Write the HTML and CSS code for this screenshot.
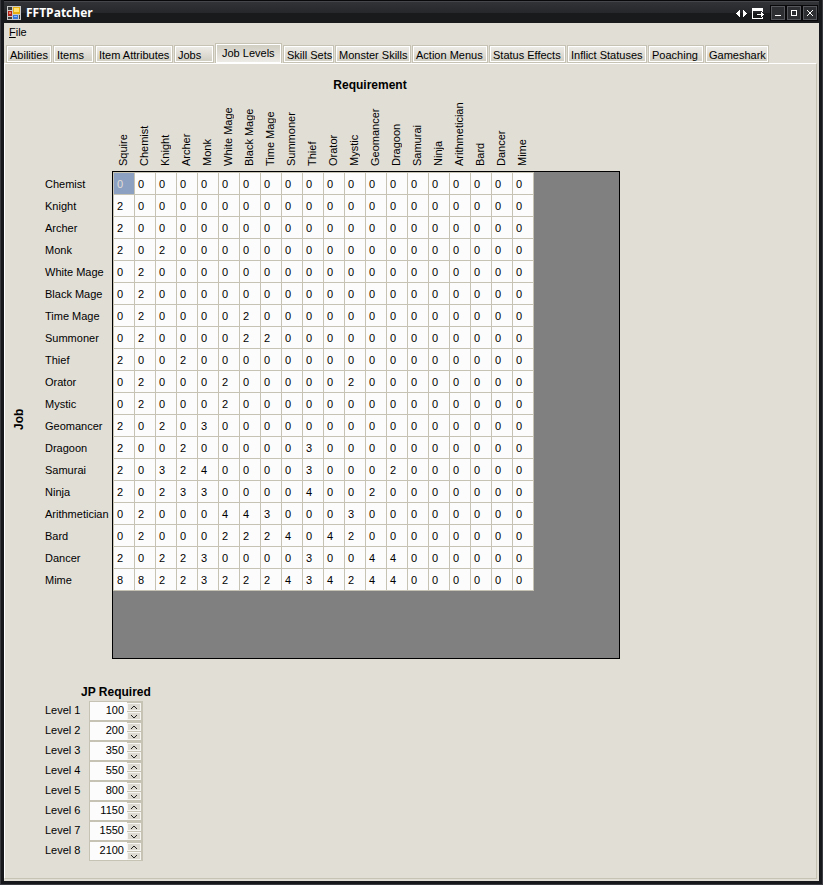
FILE: index.html
```html
<!DOCTYPE html>
<html lang="en">
<head>
<meta charset="utf-8">
<title>FFTPatcher</title>
<link rel="stylesheet" href="styles.css">
</head>
<body>
<div class="window">
  <header class="titlebar">
    <svg class="app-icon" width="14" height="14" viewBox="0 0 14 14" shape-rendering="crispEdges" aria-hidden="true">
      <rect width="14" height="14" fill="#c9c9c9"/>
      <rect x="1" y="1" width="4" height="3" fill="#3c3c3c"/>
      <rect x="1" y="5" width="4" height="5" fill="#b02018"/>
      <rect x="2" y="6" width="2" height="2" fill="#f07a60"/>
      <rect x="1" y="11" width="4" height="2" fill="#3c3c3c"/>
      <rect x="6" y="1" width="7" height="7" fill="#e8b010"/>
      <rect x="7" y="2" width="5" height="4" fill="#ffe070"/>
      <rect x="6" y="9" width="5" height="4" fill="#3a78d8"/>
      <rect x="7" y="10" width="3" height="1" fill="#8cb8ff"/>
      <rect x="12" y="9" width="1" height="4" fill="#3c3c3c"/>
    </svg>
    <h1 class="title">FFTPatcher</h1>
    <div class="title-tools">
      <button class="tool" type="button" aria-label="Switch monitor">
        <svg width="11" height="7" viewBox="0 0 11 7" shape-rendering="crispEdges"><path d="M0 3h1v1H0zM1 2h1v3H1zM2 1h1v5H2zM3 0h1v7H3zM7 0h1v7H7zM8 1h1v5H8zM9 2h1v3H9zM10 3h1v1h-1z" fill="#fff"/></svg>
      </button>
      <button class="tool" type="button" aria-label="Send to monitor">
        <svg width="12" height="11" viewBox="0 0 12 11" shape-rendering="crispEdges" fill="#fff"><path d="M0 0h11v3H0zM0 3h1v8H0zM1 10h10v1H1zM10 3h1v1h-1zM10 9h1v1h-1zM5 6h7v1H5zM9 4h1v5H9zM10 5h1v3h-1z"/></svg>
      </button>
    </div>
    <div class="caption-buttons">
      <button class="caption" type="button" aria-label="Minimize">
        <svg width="6" height="6" viewBox="0 0 6 6" shape-rendering="crispEdges"><path d="M0 5h6v1H0z" fill="#fff"/></svg>
      </button>
      <button class="caption" type="button" aria-label="Maximize">
        <svg width="6" height="6" viewBox="0 0 6 6" shape-rendering="crispEdges"><path d="M0 0h6v6H0zM1 1v4h4V1z" fill="#fff" fill-rule="evenodd"/></svg>
      </button>
      <button class="caption" type="button" aria-label="Close">
        <svg width="6" height="6" viewBox="0 0 6 6" shape-rendering="crispEdges"><path d="M0 0h1v1H0zM5 0h1v1H5zM1 1h1v1H1zM4 1h1v1H4zM2 2h2v2H2zM1 4h1v1H1zM4 4h1v1H4zM0 5h1v1H0zM5 5h1v1H5z" fill="#fff"/></svg>
      </button>
    </div>
  </header>

  <nav class="menubar"><button class="menu" type="button"><u>F</u>ile</button></nav>

  <div class="tabs" role="tablist">
    <button class="tab" role="tab" type="button">Abilities</button>
    <button class="tab" role="tab" type="button">Items</button>
    <button class="tab" role="tab" type="button">Item Attributes</button>
    <button class="tab" role="tab" type="button">Jobs</button>
    <button class="tab active" role="tab" type="button" aria-selected="true">Job Levels</button>
    <button class="tab" role="tab" type="button">Skill Sets</button>
    <button class="tab" role="tab" type="button">Monster Skills</button>
    <button class="tab" role="tab" type="button">Action Menus</button>
    <button class="tab" role="tab" type="button">Status Effects</button>
    <button class="tab" role="tab" type="button">Inflict Statuses</button>
    <button class="tab" role="tab" type="button">Poaching</button>
    <button class="tab" role="tab" type="button">Gameshark</button>
  </div>

  <main class="panel" role="tabpanel">
    <section class="requirements">
      <h2 class="axis-x">Requirement</h2>
      <div class="columns" id="columns"></div>
      <h2 class="axis-y">Job</h2>
      <div class="rows" id="rows"></div>
      <div class="grid-box">
        <table class="grid" aria-label="Job level requirements"><tbody id="cells"></tbody></table>
      </div>
    </section>
    <section class="jp">
      <h2 class="jp-title">JP Required</h2>
      <div id="levels"></div>
    </section>
  </main>
</div>
<script src="script.js"></script>
</body>
</html>
```
FILE: script.js
```js
const columns = ["Squire", "Chemist", "Knight", "Archer", "Monk", "White Mage", "Black Mage",
  "Time Mage", "Summoner", "Thief", "Orator", "Mystic", "Geomancer", "Dragoon", "Samurai",
  "Ninja", "Arithmetician", "Bard", "Dancer", "Mime"];

// Leading requirement levels per job; the remaining columns are zero.
const jobs = {
  "Chemist": "0",
  "Knight": "2",
  "Archer": "2",
  "Monk": "202",
  "White Mage": "02",
  "Black Mage": "02",
  "Time Mage": "0200002",
  "Summoner": "02000022",
  "Thief": "2002",
  "Orator": "020002000002",
  "Mystic": "020002",
  "Geomancer": "20203",
  "Dragoon": "2002000003",
  "Samurai": "20324000030002",
  "Ninja": "2023300004002",
  "Arithmetician": "020004430003",
  "Bard": "020002224042",
  "Dancer": "20223000030044",
  "Mime": "88223222434244"
};

const jp = [100, 200, 350, 550, 800, 1150, 1550, 2100];

document.getElementById("columns").innerHTML =
  columns.map(name => `<span class="column-label">${name}</span>`).join("");

document.getElementById("rows").innerHTML =
  Object.keys(jobs).map(name => `<span class="row-label">${name}</span>`).join("");

document.getElementById("cells").innerHTML = Object.values(jobs).map((levels, row) =>
  "<tr>" + levels.padEnd(columns.length, "0").split("").map((value, col) =>
    `<td${row + col === 0 ? ' class="selected"' : ""}>${value}</td>`).join("") + "</tr>").join("");

const arrow = d => `<svg width="6" height="3" viewBox="0 0 6 3" shape-rendering="crispEdges"><path d="${d}" fill="#222"/></svg>`;
const up = arrow("M2 0h2v1H2zM1 1h1v1H1zM4 1h1v1H4zM0 2h1v1H0zM5 2h1v1H5z");
const down = arrow("M0 0h1v1H0zM5 0h1v1H5zM1 1h1v1H1zM4 1h1v1H4zM2 2h2v1H2z");

document.getElementById("levels").innerHTML = jp.map((value, i) => `
  <div class="level">
    <label for="level${i + 1}">Level ${i + 1}</label>
    <div class="spinner">
      <input id="level${i + 1}" type="text" inputmode="numeric" value="${value}">
      <div class="spin-buttons">
        <button type="button" aria-label="Increase">${up}</button>
        <button type="button" aria-label="Decrease">${down}</button>
      </div>
    </div>
  </div>`).join("");
```
FILE: styles.css
```css
* { box-sizing: border-box; }

body {
  margin: 0;
  padding: 0 1px 1px;
  font: 11px/14px "Liberation Sans", Arial, sans-serif;
  color: #000;
  background: #3a3b40;
}

button, input { font: inherit; color: inherit; margin: 0; padding: 0; }
button { border: 0; background: none; }
svg { display: block; }
h1, h2 { margin: 0; font-size: 12px; line-height: 14px; font-weight: bold; }

.window {
  display: flex;
  flex-direction: column;
  min-height: calc(100vh - 1px);
  background: #e1ded6;
  border: 3px solid #17181b;
  border-top: 0;
}

.titlebar {
  display: flex;
  align-items: center;
  height: 23px;
  padding: 3px 0 0 3px;
  color: #fff;
  background: linear-gradient(#08080a 1px, #45464b 1px, #45464b 2px, #323337 2px, #26272a 13px, #191a1b 13px);
}
.title { margin-left: 5px; font-family: "Open Sans", sans-serif; }
.title-tools { display: flex; align-items: center; gap: 5px; margin-left: auto; }
.caption-buttons { display: flex; gap: 2px; margin: 0 1px 0 6px; padding: 1px; background: #08080a; }
.caption {
  display: grid;
  place-items: center;
  width: 14px;
  height: 14px;
  border: 1px solid #55575c;
  background: #2c2e32;
}

.menubar { height: 20px; padding: 2px 5px; }
.menu { display: block; }

.tabs {
  display: grid;
  grid-template-columns: 46px 41px 78px 40px 67px 51px 76px 76px 77px 80px 56px 64px;
  column-gap: 1px;
  align-items: end;
  padding-left: 2px;
}
.tab {
  height: 18px;
  padding: 1px 3px 0;
  text-align: left;
  white-space: nowrap;
  border: 1px solid #c6c2b4;
  box-shadow: inset 0 0 0 1px #fff;
  background: linear-gradient(#efede8, #cfccc1);
}
.tab.active {
  height: 21px;
  margin-bottom: -1px;
  padding: 0 6px 2px;
  background: linear-gradient(#cfccc1, #efede8);
}

.panel {
  flex: 1;
  margin-right: 2px;
  margin-bottom: 2px;
  padding: 14px 0 17px;
  border: 1px solid #fff;
  border-right-color: #c6c2b4;
  border-bottom-color: #c6c2b4;
}

.requirements {
  display: grid;
  grid-template-columns: 40px 67px 508px;
  grid-template-rows: 14px 79px 488px;
}
.axis-x { grid-column: 3; padding-left: 8px; text-align: center; }
.columns { grid-column: 3; display: flex; padding: 0 0 5px 1px; }
.column-label {
  width: 21px;
  line-height: 21px;
  writing-mode: vertical-rl;
  transform: rotate(180deg);
}
.axis-y {
  padding: 0 7px 8px 0;
  line-height: 14px;
  text-align: center;
  writing-mode: vertical-rl;
  transform: rotate(180deg);
}
.rows { padding-top: 2px; }
.row-label { display: block; line-height: 22px; }

.grid-box { border: 1px solid #000; background: #808080; }
.grid { border-collapse: collapse; table-layout: fixed; width: 421px; }
.grid td {
  height: 22px;
  padding: 0 3px;
  line-height: 14px;
  border: 1px solid #c6c2b4;
  background: #fcfcfc;
}
.grid .selected { color: #e1ded6; background: #8ca0c2; }

.jp { width: 138px; margin: 26px 0 0 40px; }
.jp-title { padding-left: 36px; margin-bottom: 2px; white-space: nowrap; }
.level { display: flex; height: 20px; }
.level label { width: 44px; line-height: 18px; }
.spinner {
  display: flex;
  width: 54px;
  border: 1px solid #c6c2b4;
  background: #c6c2b4;
}
.spinner input {
  width: 37px;
  padding: 0 3px 2px 0;
  text-align: right;
  border: 0;
  background: #fcfcfc;
}
.spin-buttons { display: grid; gap: 1px; width: 14px; padding: 1px 0 0; }
.spin-buttons button {
  display: grid;
  place-items: center;
  border: 1px solid #f6f5f2;
  background: #dddad2;
}
```
